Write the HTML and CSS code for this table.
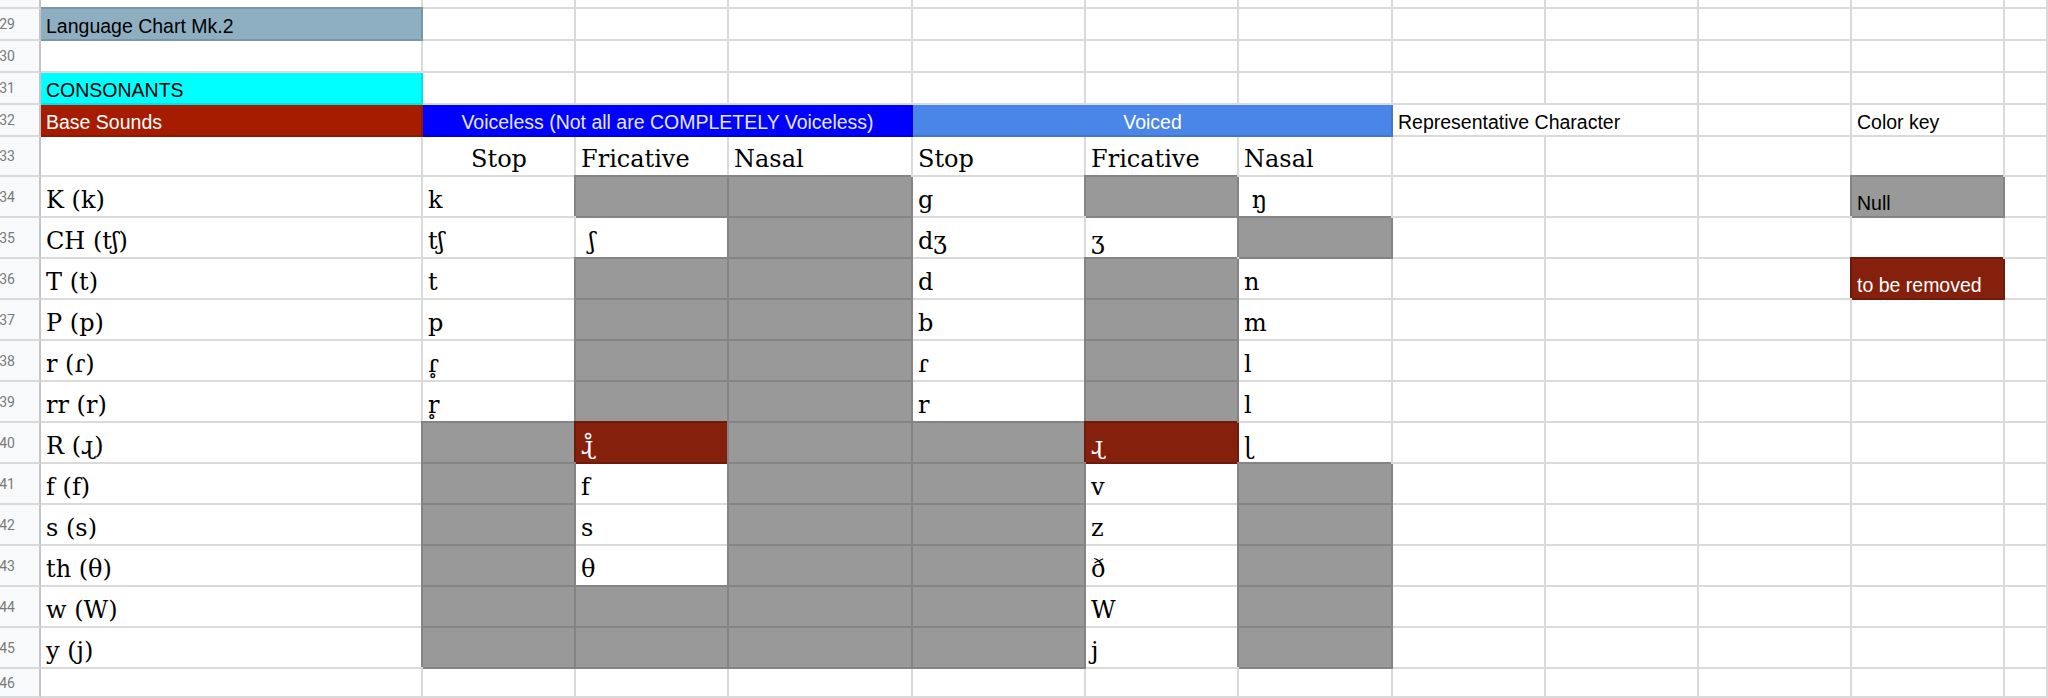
FILE: index.html
```html
<!DOCTYPE html>
<html lang="en">
<head>
<meta charset="utf-8">
<title>Language Chart Mk.2</title>
<link rel="stylesheet" href="styles.css">
</head>
<body>
<div class="sheet">
  <!-- row 28 (partial) -->
  <div class="c hd"></div><div class="c"></div><div class="c"></div><div class="c"></div><div class="c"></div><div class="c"></div><div class="c"></div><div class="c"></div><div class="c"></div><div class="c"></div><div class="c"></div><div class="c"></div><div class="c"></div>
  <!-- row 29 -->
  <div class="c hd">29</div><div class="c sans title">Language Chart Mk.2</div><div class="c"></div><div class="c"></div><div class="c"></div><div class="c"></div><div class="c"></div><div class="c"></div><div class="c"></div><div class="c"></div><div class="c"></div><div class="c"></div><div class="c"></div>
  <!-- row 30 -->
  <div class="c hd">30</div><div class="c"></div><div class="c"></div><div class="c"></div><div class="c"></div><div class="c"></div><div class="c"></div><div class="c"></div><div class="c"></div><div class="c"></div><div class="c"></div><div class="c"></div><div class="c"></div>
  <!-- row 31 -->
  <div class="c hd">31</div><div class="c sans cyan">CONSONANTS</div><div class="c"></div><div class="c"></div><div class="c"></div><div class="c"></div><div class="c"></div><div class="c"></div><div class="c"></div><div class="c"></div><div class="c"></div><div class="c"></div><div class="c"></div>
  <!-- row 32 -->
  <div class="c hd">32</div><div class="c sans base">Base Sounds</div><div class="c sans span3 voiceless">Voiceless (Not all are COMPLETELY Voiceless)</div><div class="c sans span3 voiced">Voiced</div><div class="c sans span2">Representative Character</div><div class="c"></div><div class="c sans">Color key</div><div class="c"></div>
  <!-- row 33 -->
  <div class="c hd">33</div><div class="c"></div><div class="c ctr">Stop</div><div class="c">Fricative</div><div class="c">Nasal</div><div class="c">Stop</div><div class="c">Fricative</div><div class="c">Nasal</div><div class="c"></div><div class="c"></div><div class="c"></div><div class="c"></div><div class="c"></div>
  <!-- row 34 -->
  <div class="c hd">34</div><div class="c">K (k)</div><div class="c">k</div><div class="c g"></div><div class="c g"></div><div class="c">g</div><div class="c g"></div><div class="c"> ŋ</div><div class="c"></div><div class="c"></div><div class="c"></div><div class="c sans g">Null</div><div class="c"></div>
  <!-- row 35 -->
  <div class="c hd">35</div><div class="c">CH (tʃ)</div><div class="c">tʃ</div><div class="c"> ʃ</div><div class="c g"></div><div class="c">dʒ</div><div class="c">ʒ</div><div class="c g"></div><div class="c"></div><div class="c"></div><div class="c"></div><div class="c"></div><div class="c"></div>
  <!-- row 36 -->
  <div class="c hd">36</div><div class="c">T (t)</div><div class="c">t</div><div class="c g"></div><div class="c g"></div><div class="c">d</div><div class="c g"></div><div class="c">n</div><div class="c"></div><div class="c"></div><div class="c"></div><div class="c sans rd">to be removed</div><div class="c"></div>
  <!-- row 37 -->
  <div class="c hd">37</div><div class="c">P (p)</div><div class="c">p</div><div class="c g"></div><div class="c g"></div><div class="c">b</div><div class="c g"></div><div class="c">m</div><div class="c"></div><div class="c"></div><div class="c"></div><div class="c"></div><div class="c"></div>
  <!-- row 38 -->
  <div class="c hd">38</div><div class="c">r (ɾ)</div><div class="c">ɾ&#x325;</div><div class="c g"></div><div class="c g"></div><div class="c">ɾ</div><div class="c g"></div><div class="c">l</div><div class="c"></div><div class="c"></div><div class="c"></div><div class="c"></div><div class="c"></div>
  <!-- row 39 -->
  <div class="c hd">39</div><div class="c">rr (r)</div><div class="c">r&#x325;</div><div class="c g"></div><div class="c g"></div><div class="c">r</div><div class="c g"></div><div class="c">l</div><div class="c"></div><div class="c"></div><div class="c"></div><div class="c"></div><div class="c"></div>
  <!-- row 40 -->
  <div class="c hd">40</div><div class="c">R (ɻ)</div><div class="c g"></div><div class="c rd">ɻ&#x30A;</div><div class="c g"></div><div class="c g"></div><div class="c rd">ɻ</div><div class="c">ɭ</div><div class="c"></div><div class="c"></div><div class="c"></div><div class="c"></div><div class="c"></div>
  <!-- row 41 -->
  <div class="c hd">41</div><div class="c">f (f)</div><div class="c g"></div><div class="c">f</div><div class="c g"></div><div class="c g"></div><div class="c">v</div><div class="c g"></div><div class="c"></div><div class="c"></div><div class="c"></div><div class="c"></div><div class="c"></div>
  <!-- row 42 -->
  <div class="c hd">42</div><div class="c">s (s)</div><div class="c g"></div><div class="c">s</div><div class="c g"></div><div class="c g"></div><div class="c">z</div><div class="c g"></div><div class="c"></div><div class="c"></div><div class="c"></div><div class="c"></div><div class="c"></div>
  <!-- row 43 -->
  <div class="c hd">43</div><div class="c">th (θ)</div><div class="c g"></div><div class="c">θ</div><div class="c g"></div><div class="c g"></div><div class="c">ð</div><div class="c g"></div><div class="c"></div><div class="c"></div><div class="c"></div><div class="c"></div><div class="c"></div>
  <!-- row 44 -->
  <div class="c hd">44</div><div class="c">w (W)</div><div class="c g"></div><div class="c g"></div><div class="c g"></div><div class="c g"></div><div class="c">W</div><div class="c g"></div><div class="c"></div><div class="c"></div><div class="c"></div><div class="c"></div><div class="c"></div>
  <!-- row 45 -->
  <div class="c hd">45</div><div class="c">y (j)</div><div class="c g"></div><div class="c g"></div><div class="c g"></div><div class="c g"></div><div class="c">j</div><div class="c g"></div><div class="c"></div><div class="c"></div><div class="c"></div><div class="c"></div><div class="c"></div>
  <!-- row 46 -->
  <div class="c hd">46</div><div class="c"></div><div class="c"></div><div class="c"></div><div class="c"></div><div class="c"></div><div class="c"></div><div class="c"></div><div class="c"></div><div class="c"></div><div class="c"></div><div class="c"></div><div class="c"></div>
</div>
</body>
</html>
```

FILE: styles.css
```css
* { box-sizing: border-box; }

html, body {
  margin: 0;
  padding: 0;
  background: #ffffff;
}

body {
  width: 2048px;
  height: 698px;
  overflow: hidden;
}

.sheet {
  display: grid;
  grid-template-columns: 41px 382px 153px 153px 184px 173px 153px 154px 153px 153px 153px 153px 1fr;
  grid-template-rows: 9px repeat(4, 32px) 40px repeat(12, 41px) 1fr;
  height: 698px;
  width: 2048px;
}

.c {
  display: flex;
  align-items: flex-end;
  min-width: 0;
  padding: 0 4px 2px 5px;
  border-right: 2px solid #dadada;
  border-bottom: 2px solid #dadada;
  font-family: "DejaVu Serif", "Liberation Serif", serif;
  font-size: 24px;
  line-height: 28px;
  color: #000000;
  white-space: pre;
}

.sans {
  font-family: "Liberation Sans", Arial, sans-serif;
  font-size: 19.5px;
  line-height: 22px;
  padding-bottom: 2px;
}

.hd {
  background: #f8f9fa;
  border-right-color: #c4c4c4;
  justify-content: flex-end;
  align-items: center;
  padding: 0 24px 0 0;
  overflow: hidden;
  font-family: Roboto, "Liberation Sans", sans-serif;
  font-size: 14px;
  line-height: 16px;
  color: #7a7a7a;
}

.ctr { justify-content: center; }

.span3 {
  grid-column: span 3;
  justify-content: center;
}

.span2 { grid-column: span 2; }

.title {
  background: #8eafc2;
  border-color: #7a97a8;
  box-shadow: 0 -2px 0 0 #7a97a8;
}

.cyan {
  background: #00ffff;
  border-color: #00e4e4;
}

.base {
  background: #a61c00;
  border-color: #8f1800;
  color: #ffffff;
}

.voiceless {
  background: #0000ff;
  border-color: #0000dd;
  color: #e4e6ff;
}

.voiced {
  background: #4a86e8;
  border-color: #4277cc;
  color: #ffffff;
}

.g {
  background: #999999;
  border-color: #848484;
  box-shadow: -2px -2px 0 0 #848484;
}

.rd {
  background: #85200c;
  border-color: #6f1a0a;
  box-shadow: -2px -2px 0 0 #6f1a0a;
  color: #ffffff;
}
```
